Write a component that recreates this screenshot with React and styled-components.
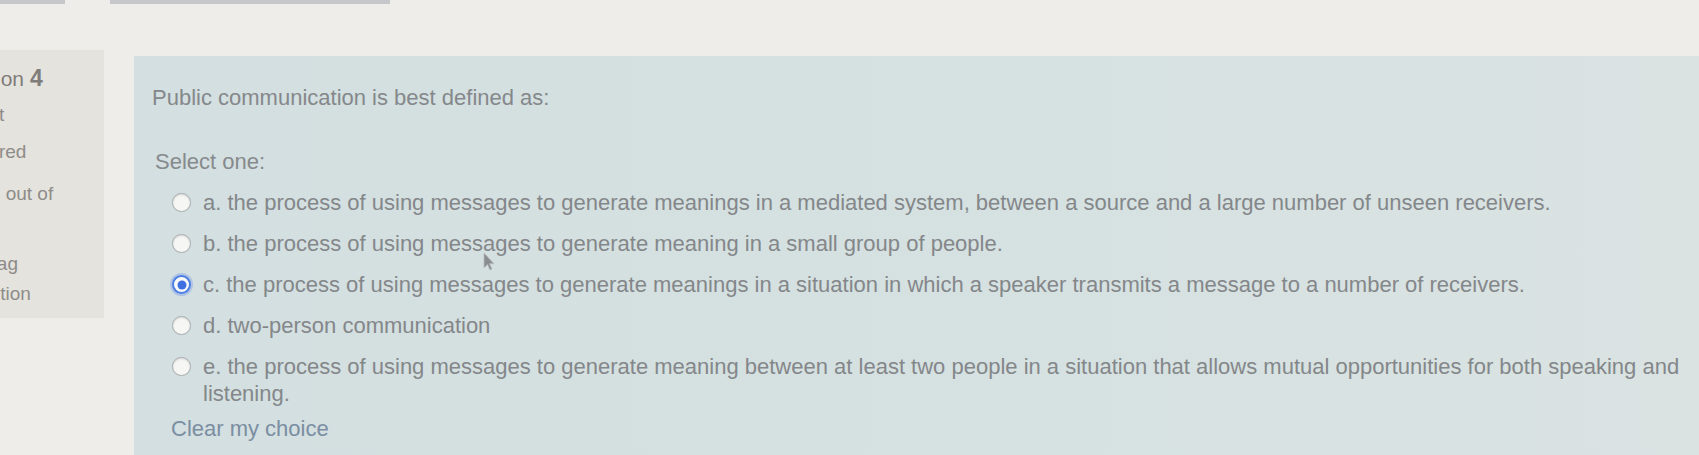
import React from "react";
import styled, { createGlobalStyle } from "styled-components";

const GlobalStyle = createGlobalStyle`
  html, body {
    margin: 0;
    padding: 0;
    background: #eeede9;
    overflow: hidden;
  }
  body {
    font-family: "Liberation Sans", Arial, Helvetica, sans-serif;
    color: #86898c;
  }
`;

const Page = styled.div`
  width: 1699px;
  height: 455px;
  display: flex;
  flex-direction: column;
  overflow: hidden;
`;

const TopStrip = styled.div`
  display: flex;
  height: 4px;
  gap: 45px;
`;

const Stub = styled.div`
  width: ${(p) => p.w}px;
  height: 4px;
  background: #c6c7ca;
`;

const Main = styled.div`
  display: flex;
  align-items: flex-start;
  padding-top: 46px;
  flex: 1;
`;

/* the question info box is partly off the left edge of the screen */
const InfoPanel = styled.div`
  margin-left: -70px;
  width: 174px;
  height: 268px;
  flex: none;
  box-sizing: border-box;
  padding: 14px 10px 10px;
  background: #e5e3de;
  font-size: 19px;
  color: #8e8c88;
`;

const QTitle = styled.h3`
  margin: 0 0 3px;
  font-size: 21px;
  font-weight: normal;
  line-height: 28px;
  color: #7f7d7a;
  white-space: nowrap;
`;

const QNo = styled.span`
  font-size: 23px;
  font-weight: bold;
`;

const InfoLine = styled.div`
  width: 125px;
  line-height: 37px;
  margin-top: ${(p) => p.gap || 0}px;
  margin-left: ${(p) => p.indent || 0}px;
`;

const FlagLink = styled.div`
  width: 100px;
  margin-left: 19px;
  line-height: 30px;
`;

const FlagIcon = styled.svg`
  display: inline-block;
  vertical-align: -2px;
  margin-right: 6px;
`;

const Content = styled.div`
  position: relative;
  flex: 1;
  margin-left: 30px;
  margin-top: 6px;
  margin-right: -20px;
  height: 420px;
  box-sizing: border-box;
  padding: 28px 0 0 18px;
  background: linear-gradient(90deg, #d3dfe0 0%, #d6e1e1 60%, #dae3e2 100%);
  font-size: 22px;
  line-height: 27px;
`;

const QText = styled.p`
  margin: 0 0 37px;
  color: #85888b;
`;

const Prompt = styled.div`
  margin: 0 0 14px 3px;
  color: #878a8d;
`;

const Answers = styled.div`
  display: flex;
  flex-direction: column;
  gap: 14px;
  padding-left: 20px;
  width: 1510px;
`;

const Option = styled.label`
  display: flex;
  align-items: flex-start;
  gap: 12px;
  color: #84878a;
`;

const Radio = styled.span`
  position: relative;
  flex: none;
  width: 19px;
  height: 19px;
  margin-top: 4px;
  border-radius: 50%;
  box-sizing: border-box;
  background: ${(p) => (p.checked ? "#fbfbfb" : "#f6f6f5")};
  border: ${(p) => (p.checked ? "2px solid #4d7ee2" : "1px solid #aeb0b2")};
  box-shadow: ${(p) =>
    p.checked
      ? "0 0 0 2px rgba(130, 165, 235, 0.45)"
      : "inset 0 1px 2px rgba(0,0,0,0.12), 0 0 1px rgba(0,0,0,0.1)"};

  &::after {
    content: "";
    display: ${(p) => (p.checked ? "block" : "none")};
    position: absolute;
    left: 50%;
    top: 50%;
    width: 9px;
    height: 9px;
    border-radius: 50%;
    background: #3f6fe0;
    transform: translate(-50%, -50%);
  }
`;

const ClearLink = styled.a`
  display: inline-block;
  margin: 8px 0 0 19px;
  color: #7b8ea2;
  text-decoration: none;
`;

const Cursor = styled.svg`
  position: absolute;
  left: 349px;
  top: 196px;
`;

const answers = [
  "a. the process of using messages to generate meanings in a mediated system, between a source and a large number of unseen receivers.",
  "b. the process of using messages to generate meaning in a small group of people.",
  "c. the process of using messages to generate meanings in a situation in which a speaker transmits a message to a number of receivers.",
  "d. two-person communication",
  "e. the process of using messages to generate meaning between at least two people in a situation that allows mutual opportunities for both speaking and listening.",
];

export default function App() {
  return (
    <>
      <GlobalStyle />
      <Page>
        <TopStrip>
          <Stub w={65} />
          <Stub w={280} />
        </TopStrip>
        <Main>
          <InfoPanel>
            <QTitle>
              Question <QNo>4</QNo>
            </QTitle>
            <InfoLine indent={4}>Not yet answered</InfoLine>
            <InfoLine gap={5} indent={-3}>Marked out of 1.00</InfoLine>
            <FlagLink>
              <FlagIcon width="16" height="16" viewBox="0 0 16 16">
                <path d="M3 1v14M3 2h9l-2 3 2 3H3" fill="none" stroke="#9a9894" strokeWidth="1.5" />
              </FlagIcon>
              Flag question
            </FlagLink>
          </InfoPanel>
          <Content>
            <QText>Public communication is best defined as:</QText>
            <Prompt>Select one:</Prompt>
            <Answers>
              {answers.map((text, i) => (
                <Option key={i}>
                  <Radio checked={i === 2} />
                  <span>{text}</span>
                </Option>
              ))}
            </Answers>
            <ClearLink href="#">Clear my choice</ClearLink>
            <Cursor width="12" height="19" viewBox="0 0 12 19">
              <path d="M1 1v15l3.5-3.5 2.5 5.5 2-1-2.5-5.3H11z" fill="#8a8d90" stroke="#b9bec0" strokeWidth="0.8" />
            </Cursor>
          </Content>
        </Main>
      </Page>
    </>
  );
}
